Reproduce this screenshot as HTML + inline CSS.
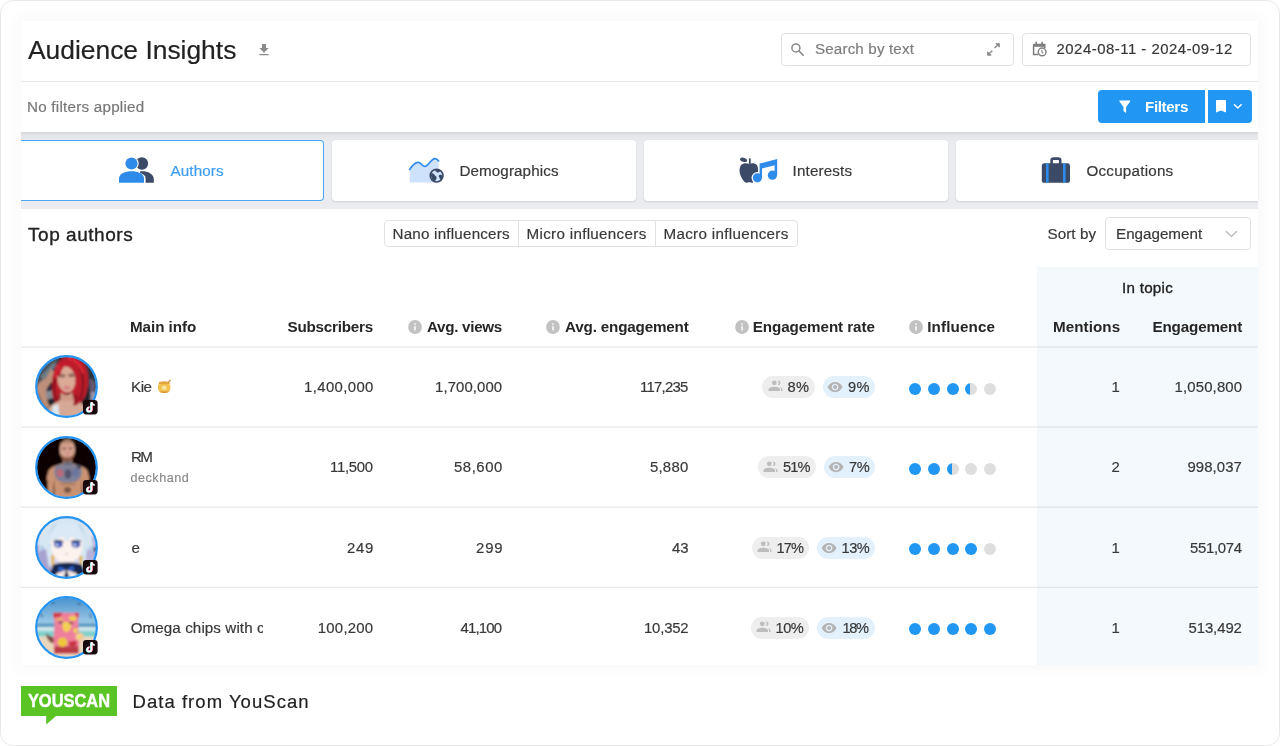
<!DOCTYPE html>
<html lang="en">
<head>
<meta charset="utf-8">
<title>Audience Insights</title>
<style>
*{box-sizing:border-box;margin:0;padding:0}
html,body{width:1280px;height:746px;background:#fff;overflow:hidden}
body{will-change:transform;font-family:"Liberation Sans",sans-serif;color:#2b2b2b;position:relative}
.a{position:absolute}
.t{position:absolute;white-space:nowrap;line-height:1;font-size:15.2px;color:#383838;-webkit-text-stroke:.18px currentColor}
.b{font-weight:700;color:#262626;font-size:15.2px;-webkit-text-stroke:0}
.p{font-size:14.6px}
.n{font-size:14.9px}
.m{-webkit-text-stroke:.35px currentColor}
.r{text-align:right}
svg{position:absolute;overflow:visible}
#frame{left:0;top:0;width:1280px;height:746px;border:1px solid #e9e9e9;border-radius:13px}
#panel{left:21px;top:21px;width:1237px;height:644px;background:#fff;box-shadow:0 0 14px 6px rgba(0,0,0,.025)}
.hr{height:1px;background:#e9e9e9;left:21px;width:1237px}
.hr2{height:2px;left:21px;width:1237px}
.box{border:1px solid #e0e2e5;border-radius:4px;background:#fff}
#band{left:21px;top:132px;width:1237px;height:77px;background:linear-gradient(#d7d8db 0,#e5e6e9 4px,#ebecef 10px,#ebecef 100%)}
.tab{top:140px;height:61px;background:#fff;border-radius:4px;box-shadow:0 1px 2px rgba(0,0,0,.12)}
#tab1{left:21px;width:303px;border:1.5px solid #4ba6f5;border-left:0;border-radius:0 4px 4px 0;box-shadow:none}
#tab2{left:332px;width:304px}
#tab3{left:644px;width:304px}
#tab4{left:956px;width:302px;border-radius:4px 0 0 4px}
#seg{left:384px;top:220px;width:414px;height:27px}
.vd{top:221px;width:1px;height:25px;background:#e0e2e5}
#topic{left:1037px;top:267px;width:221px;height:398px;background:#f4f9fe}
.btn{background:#2196f3;top:90px;height:33px}
.pill{height:22px;border-radius:11px}
.pg{background:#eeeeee}
.pb{background:#e3f1fd}
.dot{width:12px;height:12px;border-radius:6px;background:#2196f3}
.dg{background:#dedede}
.dh{background:linear-gradient(90deg,#2196f3 0,#2196f3 42%,#dedede 42%)}
.av{width:63px;height:63px;left:35px}
#t_title{left:28.00px;top:37.00px;letter-spacing:0.000px}
#t_search{left:815.00px;top:41.00px;letter-spacing:0.138px}
#t_date{left:1056.50px;top:42.00px;letter-spacing:0.511px}
#t_nofilt{left:27.00px;top:99.00px;letter-spacing:0.238px}
#t_filters{left:1145.00px;top:99.00px;letter-spacing:-0.375px}
#t_tab1{left:170.50px;top:162.60px;letter-spacing:0.113px}
#t_tab2{left:459.40px;top:162.60px;letter-spacing:0.110px}
#t_tab3{left:792.50px;top:162.60px;letter-spacing:0.169px}
#t_tab4{left:1086.50px;top:162.60px;letter-spacing:0.225px}
#t_top{left:28.00px;top:224.61px;letter-spacing:0.540px}
#t_seg1{left:392.50px;top:226.00px;letter-spacing:0.210px}
#t_seg2{left:526.50px;top:226.00px;letter-spacing:0.309px}
#t_seg3{left:663.50px;top:226.00px;letter-spacing:0.309px}
#t_sortby{left:1047.50px;top:226.00px;letter-spacing:0.075px}
#t_sortval{left:1116.00px;top:226.00px;letter-spacing:0.000px}
#t_intopic{left:1122.00px;top:280.00px;letter-spacing:0.257px}
#h_main{left:130.00px;top:319.00px;letter-spacing:-0.056px}
#h_subs{left:287.50px;top:319.00px;letter-spacing:-0.202px}
#h_views{left:427.00px;top:319.00px;letter-spacing:-0.300px}
#h_eng{left:565.00px;top:319.00px;letter-spacing:-0.161px}
#h_rate{left:752.75px;top:319.00px;letter-spacing:-0.080px}
#h_inf{left:927.25px;top:319.00px;letter-spacing:0.141px}
#h_men{left:1053.00px;top:319.00px;letter-spacing:0.064px}
#h_teng{left:1152.50px;top:319.00px;letter-spacing:-0.150px}
#r1_name{left:131.00px;top:379.00px;letter-spacing:-0.450px}
#r1_subs{left:304.00px;top:380.00px;letter-spacing:0.394px}
#r1_views{left:435.00px;top:380.00px;letter-spacing:0.112px}
#r1_eng{left:640.00px;top:380.00px;letter-spacing:-0.750px}
#r1_men{left:1111.50px;top:380.00px;letter-spacing:0.000px}
#r1_teng{left:1174.50px;top:380.00px;letter-spacing:0.169px}
#r1_p1{left:787.50px;top:380.00px;letter-spacing:0.450px}
#r1_p2{left:848.00px;top:380.00px;letter-spacing:0.450px}
#r2_name{left:131.00px;top:449.00px;letter-spacing:-1.800px}
#r2_sub{left:130.50px;top:471.70px;letter-spacing:0.514px}
#r2_subs{left:330.00px;top:460.20px;letter-spacing:-0.270px}
#r2_views{left:454.00px;top:460.20px;letter-spacing:0.540px}
#r2_eng{left:650.00px;top:460.20px;letter-spacing:0.225px}
#r2_men{left:1111.50px;top:460.20px;letter-spacing:0.000px}
#r2_teng{left:1187.50px;top:460.20px;letter-spacing:0.075px}
#r2_p1{left:783.00px;top:460.20px;letter-spacing:-0.900px}
#r2_p2{left:849.00px;top:460.20px;letter-spacing:-0.450px}
#r3_name{left:131.50px;top:539.61px;letter-spacing:0.000px}
#r3_subs{left:347.00px;top:540.61px;letter-spacing:0.675px}
#r3_views{left:476.00px;top:540.61px;letter-spacing:0.900px}
#r3_eng{left:672.00px;top:540.61px;letter-spacing:-0.000px}
#r3_men{left:1111.50px;top:540.61px;letter-spacing:0.000px}
#r3_teng{left:1190.00px;top:540.61px;letter-spacing:-0.300px}
#r3_p1{left:776.50px;top:540.61px;letter-spacing:-0.900px}
#r3_p2{left:841.50px;top:540.61px;letter-spacing:-0.450px}
#r4_name{left:130.70px;top:619.81px;letter-spacing:0.080px}
#r4_subs{left:317.75px;top:620.81px;letter-spacing:0.263px}
#r4_views{left:460.50px;top:620.81px;letter-spacing:-0.810px}
#r4_eng{left:644.00px;top:620.81px;letter-spacing:-0.180px}
#r4_men{left:1111.50px;top:620.81px;letter-spacing:0.000px}
#r4_teng{left:1188.50px;top:620.81px;letter-spacing:-0.075px}
#r4_p1{left:775.50px;top:620.81px;letter-spacing:-0.450px}
#r4_p2{left:842.50px;top:620.81px;letter-spacing:-1.350px}
#t_foot{left:132.50px;top:692.61px;letter-spacing:1.041px}
</style>
</head>
<body>
<div id="frame" class="a"></div>
<main id="panel" class="a"></main>

<header>
  <h1 id="t_title" class="t" style="font-size:26.4px;font-weight:400;color:#222">Audience Insights</h1>
  <svg id="ic_dl" style="left:255.5px;top:41.7px" width="16" height="16" viewBox="0 0 24 24"><path fill="#8a8a8a" d="M19 9h-4V3H9v6H5l7 7 7-7zM5 18v2h14v-2H5z"/></svg>
  <div class="a box" style="left:781px;top:33px;width:233px;height:33px"></div>
  <svg style="left:790px;top:41.5px" width="15" height="15" viewBox="0 0 15 15"><circle cx="5.9" cy="5.9" r="4" fill="none" stroke="#8a8a8a" stroke-width="1.5"/><path d="M8.9 8.9L13.2 13.2" stroke="#8a8a8a" stroke-width="1.6" stroke-linecap="round"/></svg>
  <span id="t_search" class="t" style="color:#7d7d7d">Search by text</span>
  <svg style="left:986px;top:42px" width="15" height="15" viewBox="0 0 15 15"><g fill="#8a8a8a" stroke="#8a8a8a" stroke-width="1.4"><path d="M8.500 6.100L12.600 2.300" fill="none"/><path d="M10 1.600H13.400V5.200Z" stroke-width=".8" stroke-linejoin="round"/><path d="M6.300 8.800L2.200 12.600" fill="none"/><path d="M1.500 9.800V13.300H5.200Z" stroke-width=".8" stroke-linejoin="round"/></g></svg>
  <div class="a box" style="left:1022px;top:33px;width:229px;height:33px"></div>
  <svg style="left:1032px;top:41px" width="16" height="17" viewBox="0 0 16 17"><g fill="none" stroke="#7d7d7d" stroke-width="1.5"><path d="M1.6 3.4H12.8V7M1.6 3.4V13.6H6"/><path d="M4.2 .8V3M10.2 .8V3" stroke-width="1.6"/><path d="M1.6 4.6H12.8" stroke-width="2.4"/><circle cx="10.1" cy="10.9" r="3.9" fill="#fff" stroke-width="1.4"/><path d="M9.900 8.900V11.100L11.300 12.300" stroke-width="1.100"/></g></svg>
  <span id="t_date" class="t n">2024-08-11 - 2024-09-12</span>
</header>
<div class="a hr" style="top:81px"></div>

<section>
  <span id="t_nofilt" class="t" style="color:#777">No filters applied</span>
  <div class="a btn" style="left:1098px;width:107px;border-radius:4px 0 0 4px"></div>
  <div class="a btn" style="left:1207.5px;width:44px;border-radius:0 4px 4px 0"></div>
  <svg style="left:1118.7px;top:100px" width="11.6" height="13" viewBox="0 0 13 13" preserveAspectRatio="none"><path fill="#fff" d="M.9 .5H12.1C12.6 .5 12.8 1 12.5 1.4L8 7V12.2C8 12.7 7.5 12.9 7.1 12.6L5.4 11.3C5.1 11.1 5 10.9 5 10.6V7L.5 1.4C.2 1 .4 .5 .9 .5Z"/></svg>
  <span id="t_filters" class="t b" style="color:#fff">Filters</span>
  <svg style="left:1216px;top:100px" width="10" height="13" viewBox="0 0 10 13"><path fill="#fff" d="M1 0H9C9.6 0 10 .4 10 1V12.6L5 10.4 0 12.6V1C0 .4 .4 0 1 0Z"/></svg>
  <svg style="left:1233px;top:103px" width="10" height="7" viewBox="0 0 10 7"><path d="M1 1.2L4.8 5 8.6 1.2" fill="none" stroke="#fff" stroke-width="1.5"/></svg>
</section>

<nav>
  <div id="band" class="a"></div>
  <div id="tab1" class="a tab"></div>
  <div id="tab2" class="a tab"></div>
  <div id="tab3" class="a tab"></div>
  <div id="tab4" class="a tab"></div>
  <!-- authors icon -->
  <svg style="left:118px;top:156px" width="37" height="28" viewBox="0 0 37 28">
    <circle cx="23.9" cy="7.5" r="6.2" fill="#3b4a66"/>
    <path fill="#3b4a66" d="M22 15.4C28 14.6 35.8 17 35.8 23.6V26.8H24Z"/>
    <circle cx="13.5" cy="7.5" r="7.2" fill="#fff"/>
    <path fill="#fff" d="M0 28V22C0 14 27.6 14 27.6 22V28Z"/>
    <circle cx="13.5" cy="7.5" r="6.1" fill="#2f8bea"/>
    <path fill="#2f8bea" d="M1 26.8V22.6C1 17.4 7.4 15.2 13.5 15.2S26 17.4 26 22.6V26.8Z"/>
  </svg>
  <span id="t_tab1" class="t" style="color:#3d9df2">Authors</span>
  <!-- demographics icon -->
  <svg style="left:408px;top:156px" width="38" height="28" viewBox="0 0 38 28">
    <path fill="#cfe2fb" d="M1.8 13.4C4.6 9 8 5.6 11 6.6C13.6 7.6 15 10.8 17.4 10.4C21 9.6 23 2.6 27 2.6C28.6 2.6 29.8 3.8 30.6 5V26.6H1.8Z"/>
    <path fill="none" stroke="#2f8bea" stroke-width="1.6" stroke-linecap="round" d="M1.6 13.6C4.6 9 8 5.6 11 6.6C13.6 7.6 15 10.8 17.4 10.4C21 9.6 23 2.6 27 2.6C28.6 2.6 29.8 3.8 30.6 5"/>
    <circle cx="28.6" cy="19.6" r="6.4" fill="#cfe2fb" stroke="#3b4a66" stroke-width="1.6"/>
    <path fill="#3b4a66" d="M23 17.4C24.4 17 26 17.6 26.6 19C27.4 20.2 28.8 20.4 28.6 22C28.4 23.4 27.4 24.4 26.8 25.4C24.4 24.4 22.6 21.2 23 17.4ZM27.4 13.6C29 13.2 31.8 13.6 33 15C31.8 15.2 31.4 16.4 30.2 16.6C29 16.8 28.6 15.4 27.4 15.2ZM31.4 19C32.6 18.6 34.2 19 34.8 20C34.6 21.8 33.8 23.2 32.6 24.2C31.8 23 31.8 21.8 31 21C30.6 20.2 30.8 19.4 31.4 19Z"/>
  </svg>
  <span id="t_tab2" class="t">Demographics</span>
  <!-- interests icon -->
  <svg style="left:739px;top:157px" width="40" height="27" viewBox="0 0 40 27">
    <ellipse cx="4.6" cy="2.8" rx="3.6" ry="2" fill="#3b4a66" transform="rotate(18 4.6 2.8)"/>
    <path d="M10.8 1.4V7" stroke="#3b4a66" stroke-width="1.8"/>
    <path fill="#3b4a66" d="M10.4 7.2C12.4 5.8 16 5.8 17.8 8C19.6 10.4 19.4 15 17.8 19.4C16.6 22.6 14.6 26.4 12 25.6C10.8 25.2 10 25.2 8.8 25.6C6 26.4 3.6 23 2 19.4C0 15 .2 10.4 2.2 8C4.2 5.8 8.2 5.8 10.4 7.2Z"/>
    <circle cx="18.4" cy="20.8" r="5.9" fill="#fff"/>
    <path fill="#fff" d="M19.6 5.6L39.4 .4V20H34V9.4L24.4 12V22H19.6Z"/>
    <circle cx="18.4" cy="20.8" r="4.6" fill="#2f8bea"/>
    <circle cx="33.4" cy="18.2" r="4.6" fill="#2f8bea"/>
    <path fill="#2f8bea" d="M20.6 6.6L38.2 2V18.2H35.6V8.2L23 11.6V20.8H20.6Z"/>
  </svg>
  <span id="t_tab3" class="t">Interests</span>
  <!-- briefcase icon -->
  <svg style="left:1041px;top:156px" width="30" height="28" viewBox="0 0 30 28">
    <path d="M10.6 8V4.4C10.6 3.2 11.4 2.6 12.4 2.6H17.4C18.4 2.6 19.2 3.2 19.2 4.4V8" fill="none" stroke="#3b4a66" stroke-width="2.6"/>
    <rect x=".8" y="7.2" width="28.2" height="19.6" rx="2.6" fill="#3b4a66"/>
    <rect x="5" y="7.2" width="2.6" height="19.6" fill="#2f8bea"/>
    <rect x="22" y="7.2" width="2.6" height="19.6" fill="#2f8bea"/>
  </svg>
  <span id="t_tab4" class="t">Occupations</span>
</nav>

<section>
  <h2 id="t_top" class="t m" style="font-size:19px;font-weight:400;color:#222">Top authors</h2>
  <div id="seg" class="a box"></div>
  <div class="a vd" style="left:518px"></div>
  <div class="a vd" style="left:655px"></div>
  <span id="t_seg1" class="t">Nano influencers</span>
  <span id="t_seg2" class="t">Micro influencers</span>
  <span id="t_seg3" class="t">Macro influencers</span>
  <span id="t_sortby" class="t">Sort by</span>
  <div class="a box" style="left:1105px;top:217px;width:146px;height:33px"></div>
  <span id="t_sortval" class="t">Engagement</span>
  <svg style="left:1225px;top:230px" width="13" height="8" viewBox="0 0 13 8"><path d="M1 1.2L6.4 6.4 11.8 1.2" fill="none" stroke="#b5b5b5" stroke-width="1.3"/></svg>
</section>

<section id="table">
  <div id="topic" class="a"></div>
  <span id="t_intopic" class="t m" style="color:#222">In topic</span>
  <span id="h_main" class="t b">Main info</span>
  <span id="h_subs" class="t b">Subscribers</span>
  <span id="h_views" class="t b">Avg. views</span>
  <span id="h_eng" class="t b">Avg. engagement</span>
  <span id="h_rate" class="t b">Engagement rate</span>
  <span id="h_inf" class="t b">Influence</span>
  <span id="h_men" class="t b">Mentions</span>
  <span id="h_teng" class="t b">Engagement</span>
  <svg style="left:408.0px;top:319.600px" width="14" height="14" viewBox="0 0 14 14"><circle cx="7" cy="7" r="6.900" fill="#c2c2c2"/><path d="M7 6.200V10.400" stroke="#fff" stroke-width="1.500"/><circle cx="7" cy="4.100" r=".95" fill="#fff"/></svg>
<svg style="left:546.0px;top:319.600px" width="14" height="14" viewBox="0 0 14 14"><circle cx="7" cy="7" r="6.900" fill="#c2c2c2"/><path d="M7 6.200V10.400" stroke="#fff" stroke-width="1.500"/><circle cx="7" cy="4.100" r=".95" fill="#fff"/></svg>
<svg style="left:735.0px;top:319.600px" width="14" height="14" viewBox="0 0 14 14"><circle cx="7" cy="7" r="6.900" fill="#c2c2c2"/><path d="M7 6.200V10.400" stroke="#fff" stroke-width="1.500"/><circle cx="7" cy="4.100" r=".95" fill="#fff"/></svg>
<svg style="left:909.4px;top:319.600px" width="14" height="14" viewBox="0 0 14 14"><circle cx="7" cy="7" r="6.900" fill="#c2c2c2"/><path d="M7 6.200V10.400" stroke="#fff" stroke-width="1.500"/><circle cx="7" cy="4.100" r=".95" fill="#fff"/></svg>
  <div class="a hr2" style="top:346px;background:linear-gradient(rgba(0,0,0,.055) 50%,rgba(0,0,0,.055) 50%)"></div>
  <div class="a hr2" style="top:426px;background:linear-gradient(rgba(0,0,0,.055) 50%,rgba(0,0,0,.055) 50%)"></div>
  <div class="a hr2" style="top:506px;background:linear-gradient(rgba(0,0,0,.04) 50%,rgba(0,0,0,.07) 50%)"></div>
  <div class="a hr2" style="top:586px;background:linear-gradient(rgba(0,0,0,.025) 50%,rgba(0,0,0,.085) 50%)"></div>
  <article id="r1">
<svg class="av" style="left:35.3px;top:355.4px" width="62.600" height="62.600" viewBox="0 0 63 63"><defs><clipPath id="c_r1"><circle cx="31.500" cy="31.500" r="29.600"/></clipPath></defs><g clip-path="url(#c_r1)"><filter id="blr1" x="-10%" y="-10%" width="120%" height="120%"><feGaussianBlur stdDeviation="0.8"/></filter><g filter="url(#blr1)"><rect x="-3" y="-3" width="69" height="69" fill="#1d2029"/><path d="M-2 28L4 12L24 0L22 10L10 28Z" fill="#46535f"/><path d="M5 22L19 7L21 10L9 25Z" fill="#6f7d86"/><path d="M2 33L16 30L17 40L4 43Z" fill="#17233c"/><path d="M9 37L18 35L18 43L11 45Z" fill="#858c94"/><path d="M50 6L64 14V28L53 22Z" fill="#2a303c"/><path d="M54 24C58 23 61 27 61 32C61 37 58 40 55 40Z" fill="#65566f"/><path d="M56 37L62 37L60 45L55 45Z" fill="#9c94a6"/><path d="M2 30C4 27 8 25 11 23L16 14L20 17L19 25C15 28 12 32 11 38C11 42 13 48 15 52L7 56C3 48 1 38 2 30Z" fill="#be907b"/><path d="M3 36C5 42 8 49 12 53L8 57C3 50 2 42 3 36Z" fill="#8f6856"/><path d="M9 66C10 55 16 49 25 45L41 45C48 47 53 54 54 66Z" fill="#d6a896"/><path d="M16.500 66L17.500 51L23.500 49L24.500 66Z" fill="#dde6eb"/><path d="M29 2C36 0 45 2 50 10C54 16 54 28 52 36C50 44 46 48 41 50C38 48 38 42 38 38L24 40C26 44 24 48 21 47C17 44 16 36 17 26C18 16 22 6 29 2Z" fill="#bd1c2a"/><path d="M45 13C49 22 49 34 45 45M20 23C18 32 19 40 22 46M40 40C42 44 41 48 39 50" stroke="#8c1420" stroke-width="2.800" fill="none"/><path d="M33 3C40 4 46 10 48 18M24 10C22 14 21 18 21 22" stroke="#e02c39" stroke-width="2.200" fill="none"/><ellipse cx="31.400" cy="24.500" rx="9" ry="13" fill="#dbaa97" transform="rotate(-6 31.400 24.500)"/><path d="M21 20C22 12 28 7 34 8C30 10 26 14 25 22Z" fill="#c51f2d"/><path d="M24 21.500H30M33.500 21H39.500" stroke="#6f4a42" stroke-width="1.700"/><path d="M23.500 20.500C25 19 29 19 30.500 20.500M33 20C34.500 18.700 38.500 18.700 40 20" stroke="#5a3a34" stroke-width=".8" fill="none"/><ellipse cx="31.800" cy="32.800" rx="3.200" ry="1.700" fill="#d47b85"/><path d="M26 37C29 41 34 41 37 37L39 46H25Z" fill="#cf9b87"/></g></g><circle cx="31.500" cy="31.500" r="30.300" fill="none" stroke="#2493f3" stroke-width="2.200"/></svg><svg style="left:83.400px;top:399.6px" width="14.600" height="14.400" viewBox="0 0 14 14" preserveAspectRatio="none"><rect width="14" height="14" rx="3" fill="#180a0c"/><g transform="translate(7.900 6.900) scale(1.18) translate(-7.400 -6.800)"><path d="M7.600 2.800V8.700A1.700 1.700 0 1 1 5.900 7" fill="none" stroke="#5fd7e0" stroke-width="1.500" transform="translate(-.45 .35)"/><path d="M7.600 2.800V8.700A1.700 1.700 0 1 1 5.900 7" fill="none" stroke="#f0365a" stroke-width="1.500" transform="translate(.45 -.25)"/><path d="M7.600 2.600V8.700A1.700 1.700 0 1 1 5.900 7M7.600 2.800C7.800 4.200 8.800 5 10.200 5.100" fill="none" stroke="#fff" stroke-width="1.500"/></g></svg>
<span id="r1_name" class="t">Kie</span>
<svg role="img" aria-label="&#x1F36F; honey pot" style="left:157px;top:378.500px" width="15" height="15" viewBox="0 0 15 15"><title>&#x1F36F;</title><path d="M11 3.600L13.600 1" stroke="#c9863c" stroke-width="1.200"/><ellipse cx="7.200" cy="4.200" rx="5.600" ry="1.900" fill="#e0a33e"/><path fill="#f3c14e" d="M1.400 5.200H13C14 7.400 13.600 11.400 11.600 13.200C10.600 14.200 4 14.200 2.800 13.200C.8 11.400 .4 7.400 1.400 5.200Z"/><path fill="#d88d3a" d="M2.800 12.600H11.600C10.600 14.300 4 14.300 2.800 12.600Z"/><ellipse cx="7.200" cy="8.800" rx="2.600" ry="2.200" fill="#f9e29a"/></svg>
<span id="r1_subs" class="t n">1,400,000</span>
<span id="r1_views" class="t n">1,700,000</span>
<span id="r1_eng" class="t n">117,235</span>
<span id="r1_men" class="t n">1</span>
<span id="r1_teng" class="t n">1,050,800</span>
<div class="a pill pg" style="left:762.3px;top:376.1px;width:52.4px"></div>
<svg style="left:767.6px;top:380.2px" width="15" height="12" viewBox="0 0 15 12"><g fill="#bdbdbd"><circle cx="6.300" cy="2.800" r="2.400"/><path d="M.5 11V9.600C.5 7.600 4 6.800 6.300 6.800S12 7.600 12 9.600V11Z"/><path d="M9.700 .45A2.300 2.300 0 1 1 9.700 4.950A3.400 3.400 0 0 0 9.700 .45Z"/><path d="M11.600 6.900C13.400 7.300 14.500 8.300 14.500 9.600V11H13.100V9.600C13.100 8.500 12.500 7.600 11.600 6.900Z"/></g></svg>
<span id="r1_p1" class="t p">8%</span>
<div class="a pill pb" style="left:823.2px;top:376.1px;width:51.8px"></div>
<svg style="left:827.4px;top:379.0px" width="16.200" height="16.200" viewBox="0 0 24 24"><path fill="#b4b4b4" d="M12 4.500C7 4.500 2.730 7.610 1 12c1.730 4.390 6 7.500 11 7.500s9.270-3.110 11-7.500c-1.730-4.390-6-7.500-11-7.500zM12 17c-2.760 0-5-2.240-5-5s2.240-5 5-5 5 2.240 5 5-2.240 5-5 5zm0-8c-1.660 0-3 1.340-3 3s1.340 3 3 3 3-1.340 3-3-1.340-3-3-3z"/></svg>
<span id="r1_p2" class="t p">9%</span>
<i class="a dot" style="left:909.4px;top:382.6px"></i>
<i class="a dot" style="left:928.1px;top:382.6px"></i>
<i class="a dot" style="left:946.8px;top:382.6px"></i>
<i class="a dot dh" style="left:965.4px;top:382.6px"></i>
<i class="a dot dg" style="left:984.1px;top:382.6px"></i>
</article>
<article id="r2">
<svg class="av" style="left:35.3px;top:435.6px" width="62.600" height="62.600" viewBox="0 0 63 63"><defs><clipPath id="c_r2"><circle cx="31.500" cy="31.500" r="29.600"/></clipPath></defs><g clip-path="url(#c_r2)"><filter id="blr2" x="-10%" y="-10%" width="120%" height="120%"><feGaussianBlur stdDeviation="0.9"/></filter><g filter="url(#blr2)"><rect x="-3" y="-3" width="69" height="69" fill="#0c0606"/><path d="M11 66C11 52 11 40 14 34C17 30 24 29 28 27V24H37V27C41 29 49 30 52 34C55 40 55 52 54 66Z" fill="#c99373"/><path d="M19.500 42C19 50 19.500 58 21 66H18.500C17.500 58 17.800 50 19.500 42ZM46.500 42C47 50 46.500 58 45 66H47.500C48.500 58 48.200 50 46.500 42Z" fill="#6e4433"/><path d="M13 44C13 52 13 60 14 66H11V44ZM53 44C53 52 53 60 52 66H55V44Z" fill="#3a2018"/><path d="M21 30C25 27.500 41 27.500 45 30C48 34 47 42 42 45C38 47 28 47 24 45C19 42 18 34 21 30Z" fill="#7f8198"/><ellipse cx="25" cy="37" rx="3.600" ry="4" fill="#b7697a"/><ellipse cx="40.500" cy="36.500" rx="3.400" ry="4" fill="#6a769f"/><ellipse cx="33" cy="38" rx="3.500" ry="5" fill="#55566e"/><path d="M28.500 25H37V29H28.500Z" fill="#6d6a78"/><ellipse cx="44" cy="31" rx="2.500" ry="2" fill="#4a4a58"/><path d="M25 48H41" stroke="#9b6a50" stroke-width="1.200"/><ellipse cx="32.500" cy="54" rx="3.600" ry="3" fill="#7a5646"/><ellipse cx="32.300" cy="14" rx="7.700" ry="10.800" fill="#d3a08c"/><path d="M25 9C25.500 3 39 3 39.600 9C38 6 27 6 25 9Z" fill="#a67b5c"/><path d="M25.200 17C26 23 29 26 32.300 26C35.600 26 38.600 23 39.400 17C37.500 20.500 35.500 21.500 32.300 21.500C29 21.500 27 20.500 25.200 17Z" fill="#84573f"/><path d="M27.500 12.500H30.800M33.800 12.500H37" stroke="#6b4034" stroke-width="1.300"/><ellipse cx="32.300" cy="19.200" rx="2" ry=".9" fill="#d9838c"/></g></g><circle cx="31.500" cy="31.500" r="30.300" fill="none" stroke="#2493f3" stroke-width="2.200"/></svg><svg style="left:83.400px;top:479.8px" width="14.600" height="14.400" viewBox="0 0 14 14" preserveAspectRatio="none"><rect width="14" height="14" rx="3" fill="#180a0c"/><g transform="translate(7.900 6.900) scale(1.18) translate(-7.400 -6.800)"><path d="M7.600 2.800V8.700A1.700 1.700 0 1 1 5.900 7" fill="none" stroke="#5fd7e0" stroke-width="1.500" transform="translate(-.45 .35)"/><path d="M7.600 2.800V8.700A1.700 1.700 0 1 1 5.900 7" fill="none" stroke="#f0365a" stroke-width="1.500" transform="translate(.45 -.25)"/><path d="M7.600 2.600V8.700A1.700 1.700 0 1 1 5.900 7M7.600 2.800C7.800 4.200 8.800 5 10.200 5.100" fill="none" stroke="#fff" stroke-width="1.500"/></g></svg>
<span id="r2_name" class="t">RM</span>
<span id="r2_sub" class="t" style="font-size:12.600px;color:#8a8a8a">deckhand</span>
<span id="r2_subs" class="t n">11,500</span>
<span id="r2_views" class="t n">58,600</span>
<span id="r2_eng" class="t n">5,880</span>
<span id="r2_men" class="t n">2</span>
<span id="r2_teng" class="t n">998,037</span>
<div class="a pill pg" style="left:757.6px;top:456.4px;width:58.1px"></div>
<svg style="left:762.9px;top:460.5px" width="15" height="12" viewBox="0 0 15 12"><g fill="#bdbdbd"><circle cx="6.300" cy="2.800" r="2.400"/><path d="M.5 11V9.600C.5 7.600 4 6.800 6.300 6.800S12 7.600 12 9.600V11Z"/><path d="M9.700 .45A2.300 2.300 0 1 1 9.700 4.950A3.400 3.400 0 0 0 9.700 .45Z"/><path d="M11.600 6.900C13.400 7.300 14.500 8.300 14.500 9.600V11H13.100V9.600C13.100 8.500 12.500 7.600 11.600 6.900Z"/></g></svg>
<span id="r2_p1" class="t p">51%</span>
<div class="a pill pb" style="left:823.8px;top:456.4px;width:51.2px"></div>
<svg style="left:828.0px;top:459.3px" width="16.200" height="16.200" viewBox="0 0 24 24"><path fill="#b4b4b4" d="M12 4.500C7 4.500 2.730 7.610 1 12c1.730 4.390 6 7.500 11 7.500s9.270-3.110 11-7.500c-1.730-4.390-6-7.500-11-7.500zM12 17c-2.760 0-5-2.240-5-5s2.240-5 5-5 5 2.240 5 5-2.240 5-5 5zm0-8c-1.660 0-3 1.340-3 3s1.340 3 3 3 3-1.340 3-3-1.340-3-3-3z"/></svg>
<span id="r2_p2" class="t p">7%</span>
<i class="a dot" style="left:909.4px;top:462.7px"></i>
<i class="a dot" style="left:928.1px;top:462.7px"></i>
<i class="a dot dh" style="left:946.8px;top:462.7px"></i>
<i class="a dot dg" style="left:965.4px;top:462.7px"></i>
<i class="a dot dg" style="left:984.1px;top:462.7px"></i>
</article>
<article id="r3">
<svg class="av" style="left:35.3px;top:515.7px" width="62.600" height="62.600" viewBox="0 0 63 63"><defs><clipPath id="c_r3"><circle cx="31.500" cy="31.500" r="29.600"/></clipPath></defs><g clip-path="url(#c_r3)"><filter id="blr3" x="-10%" y="-10%" width="120%" height="120%"><feGaussianBlur stdDeviation="0.8"/></filter><g filter="url(#blr3)"><rect x="-3" y="-3" width="69" height="69" fill="#d3d6ee"/><path d="M-2 30L10 28L18 60L-2 66Z" fill="#9f98c9"/><path d="M50 18L66 14V60L50 58Z" fill="#b9b5dd"/><path d="M4 6L18 4L14 20L4 24Z" fill="#f1e2e2"/><path d="M48 6L58 12L58 22L50 18Z" fill="#efe4ea"/><ellipse cx="60" cy="34" rx="2" ry="3" fill="#3b3f6a"/><path d="M31 2C47 2 57 14 58 30C59 42 57 50 52 57L46 46V24H17V46L11 58C5 50 3 40 4 30C5 14 15 2 31 2Z" fill="#d6e6f2"/><path d="M7 30C7 44 9 52 13 58M56 30C56 44 54 50 51 56" stroke="#a7c3df" stroke-width="2.600" fill="none"/><path d="M20 8C16 14 14 22 14 30M44 8C48 14 50 22 50 30" stroke="#b9d2e6" stroke-width="1.600" fill="none"/><path d="M2 36L11 33L15 58L4 58Z" fill="#a8a2d0"/><path d="M52 33L61 36L60 54L49 57Z" fill="#b5b1da"/><path d="M16 25C16 19 47 19 47.500 25C48 36 45 42 39 45.500C34.500 47.500 28.500 47.500 24 45.500C18.500 42 15.500 36 16 25Z" fill="#fdf2ee"/><path d="M13 30C12 14 24 7 31 7C40 7 52 14 50.500 31L46 23L42.500 28L37.500 19L32 26L26.500 19L21.500 28L17.500 23Z" fill="#dae9f5"/><ellipse cx="23.300" cy="28.300" rx="4.400" ry="3.400" fill="#4c63b6"/><ellipse cx="41" cy="28.300" rx="4.400" ry="3.400" fill="#4c63b6"/><path d="M18.500 25.600C21 24.400 26 24.400 28.200 25.800M36 25.800C38.500 24.400 43.500 24.400 46 25.600" stroke="#2a3052" stroke-width="1.500" fill="none"/><ellipse cx="22" cy="29" rx="1.400" ry="1.200" fill="#c9d5f4"/><ellipse cx="39.800" cy="29" rx="1.400" ry="1.200" fill="#c9d5f4"/><path d="M30.500 38H33" stroke="#d9a9a0" stroke-width=".9"/><path d="M16 39.500L19.400 39.500L18.800 50.500L16.800 50.500Z" fill="#e8b23a"/><path d="M44.400 40L47.600 40L47 49.500L45 49.500Z" fill="#e8b23a"/><path d="M14 60L18 49C23 45.500 42 45.500 47 49L51 60Z" fill="#172650"/><path d="M23.500 50.500L30 52.500L29 55.500L23.500 55ZM38.800 50L33 52.200L33.800 55L38.800 54.600Z" fill="#2e62c9"/><path d="M18 66L22 57L31.500 54L41 57L46 66Z" fill="#f4e8e5"/><path d="M31.500 53L28.500 62H34.500Z" fill="#1c2d5c"/></g></g><circle cx="31.500" cy="31.500" r="30.300" fill="none" stroke="#2493f3" stroke-width="2.200"/></svg><svg style="left:83.400px;top:559.9px" width="14.600" height="14.400" viewBox="0 0 14 14" preserveAspectRatio="none"><rect width="14" height="14" rx="3" fill="#180a0c"/><g transform="translate(7.900 6.900) scale(1.18) translate(-7.400 -6.800)"><path d="M7.600 2.800V8.700A1.700 1.700 0 1 1 5.900 7" fill="none" stroke="#5fd7e0" stroke-width="1.500" transform="translate(-.45 .35)"/><path d="M7.600 2.800V8.700A1.700 1.700 0 1 1 5.900 7" fill="none" stroke="#f0365a" stroke-width="1.500" transform="translate(.45 -.25)"/><path d="M7.600 2.600V8.700A1.700 1.700 0 1 1 5.900 7M7.600 2.800C7.800 4.200 8.800 5 10.200 5.100" fill="none" stroke="#fff" stroke-width="1.500"/></g></svg>
<span id="r3_name" class="t">e</span>
<span id="r3_subs" class="t n">249</span>
<span id="r3_views" class="t n">299</span>
<span id="r3_eng" class="t n">43</span>
<span id="r3_men" class="t n">1</span>
<span id="r3_teng" class="t n">551,074</span>
<div class="a pill pg" style="left:751.5px;top:536.7px;width:57.5px"></div>
<svg style="left:756.8px;top:540.8px" width="15" height="12" viewBox="0 0 15 12"><g fill="#bdbdbd"><circle cx="6.300" cy="2.800" r="2.400"/><path d="M.5 11V9.600C.5 7.600 4 6.800 6.300 6.800S12 7.600 12 9.600V11Z"/><path d="M9.700 .45A2.300 2.300 0 1 1 9.700 4.950A3.400 3.400 0 0 0 9.700 .45Z"/><path d="M11.600 6.900C13.400 7.300 14.500 8.300 14.500 9.600V11H13.100V9.600C13.100 8.500 12.500 7.600 11.600 6.900Z"/></g></svg>
<span id="r3_p1" class="t p">17%</span>
<div class="a pill pb" style="left:817.1px;top:536.7px;width:57.9px"></div>
<svg style="left:821.3px;top:539.6px" width="16.200" height="16.200" viewBox="0 0 24 24"><path fill="#b4b4b4" d="M12 4.500C7 4.500 2.730 7.610 1 12c1.730 4.390 6 7.500 11 7.500s9.270-3.110 11-7.500c-1.730-4.390-6-7.500-11-7.500zM12 17c-2.760 0-5-2.240-5-5s2.240-5 5-5 5 2.240 5 5-2.240 5-5 5zm0-8c-1.660 0-3 1.340-3 3s1.340 3 3 3 3-1.340 3-3-1.340-3-3-3z"/></svg>
<span id="r3_p2" class="t p">13%</span>
<i class="a dot" style="left:909.4px;top:542.8px"></i>
<i class="a dot" style="left:928.1px;top:542.8px"></i>
<i class="a dot" style="left:946.8px;top:542.8px"></i>
<i class="a dot" style="left:965.4px;top:542.8px"></i>
<i class="a dot dg" style="left:984.1px;top:542.8px"></i>
</article>
<article id="r4">
<svg class="av" style="left:35.3px;top:595.8px" width="62.600" height="62.600" viewBox="0 0 63 63"><defs><clipPath id="c_r4"><circle cx="31.500" cy="31.500" r="29.600"/></clipPath></defs><g clip-path="url(#c_r4)"><filter id="blr4" x="-10%" y="-10%" width="120%" height="120%"><feGaussianBlur stdDeviation="0.8"/></filter><defs><linearGradient id="sky4" x1="0" y1="0" x2="0" y2="1"><stop offset="0" stop-color="#3a88c9"/><stop offset="1" stop-color="#a3cee8"/></linearGradient></defs><g filter="url(#blr4)"><rect x="-3" y="-3" width="69" height="32" fill="url(#sky4)"/><rect x="-3" y="27.500" width="69" height="4" fill="#5a98c3"/><rect x="-3" y="31" width="69" height="4.500" fill="#cfe7ec"/><rect x="-3" y="35" width="69" height="6" fill="#80d0cc"/><rect x="-3" y="40.500" width="69" height="30" fill="#ead6bd"/><path d="M16 5L20 7.500L17 8ZM42.500 6L46.500 8.500L43.500 9ZM5.500 16L8 21L6 21ZM54.500 16.500L57 21.500L55 21.500Z" fill="#2f5578"/><path d="M10.500 37.500L17 41L25 42.500L24.500 47.500L16 47L12.500 43Z" fill="#7c4b3c"/><path d="M18 16.700L44 16.700L43 28L44.500 42L43.500 57.500L19 57.500L18.500 42L19.500 28Z" fill="#ee7f9c"/><path d="M18 16.700L27.500 16.700L25 21L18.500 21.500ZM40 16.700L44 16.700L43.500 22L41 20Z" fill="#cf3b47"/><path d="M19 50.500L43.800 50.500L43.500 57.500L19 57.500Z" fill="#b93a45"/><path d="M33 46L42 44.500L41 50L35 50.500Z" fill="#c9303f"/><path d="M40.500 38L47 36.500L49.500 41L46 45.500L41 44Z" fill="#f3c7a0"/><ellipse cx="37.700" cy="22.300" rx="3.800" ry="2.400" fill="#f0d24a"/><path d="M27.500 27C30 25 35 25.500 36 29C36.500 33 34 36 31 36C28.500 36 27 32 27.500 27Z" fill="#f1d052"/><ellipse cx="40.600" cy="34.500" rx="2.200" ry="2.600" fill="#f0d24a"/><ellipse cx="27.500" cy="46.200" rx="4.800" ry="4.700" fill="#efc83e"/><ellipse cx="44" cy="40.500" rx="2" ry="2.600" fill="#f3d66a"/><path d="M23.500 26.500H27.500M34 27H38" stroke="#5a3a30" stroke-width="1.700"/><path d="M21 24.500C23.500 22.500 26.500 22.500 28.500 24" stroke="#e9c548" stroke-width="1.600" fill="none"/></g></g><circle cx="31.500" cy="31.500" r="30.300" fill="none" stroke="#2493f3" stroke-width="2.200"/></svg><svg style="left:83.400px;top:639.9px" width="14.600" height="14.400" viewBox="0 0 14 14" preserveAspectRatio="none"><rect width="14" height="14" rx="3" fill="#180a0c"/><g transform="translate(7.900 6.900) scale(1.18) translate(-7.400 -6.800)"><path d="M7.600 2.800V8.700A1.700 1.700 0 1 1 5.900 7" fill="none" stroke="#5fd7e0" stroke-width="1.500" transform="translate(-.45 .35)"/><path d="M7.600 2.800V8.700A1.700 1.700 0 1 1 5.900 7" fill="none" stroke="#f0365a" stroke-width="1.500" transform="translate(.45 -.25)"/><path d="M7.600 2.600V8.700A1.700 1.700 0 1 1 5.900 7M7.600 2.800C7.800 4.200 8.800 5 10.200 5.100" fill="none" stroke="#fff" stroke-width="1.500"/></g></svg>
<span id="r4_name" class="t" style="width:132.6px;overflow:hidden;padding-bottom:4px">Omega chips with c</span>
<span id="r4_subs" class="t n">100,200</span>
<span id="r4_views" class="t n">41,100</span>
<span id="r4_eng" class="t n">10,352</span>
<span id="r4_men" class="t n">1</span>
<span id="r4_teng" class="t n">513,492</span>
<div class="a pill pg" style="left:750.5px;top:616.9px;width:58.5px"></div>
<svg style="left:755.8px;top:621.0px" width="15" height="12" viewBox="0 0 15 12"><g fill="#bdbdbd"><circle cx="6.300" cy="2.800" r="2.400"/><path d="M.5 11V9.600C.5 7.600 4 6.800 6.300 6.800S12 7.600 12 9.600V11Z"/><path d="M9.700 .45A2.300 2.300 0 1 1 9.700 4.950A3.400 3.400 0 0 0 9.700 .45Z"/><path d="M11.600 6.900C13.400 7.300 14.500 8.300 14.500 9.600V11H13.100V9.600C13.100 8.500 12.500 7.600 11.600 6.900Z"/></g></svg>
<span id="r4_p1" class="t p">10%</span>
<div class="a pill pb" style="left:817.1px;top:616.9px;width:57.9px"></div>
<svg style="left:821.3px;top:619.8px" width="16.200" height="16.200" viewBox="0 0 24 24"><path fill="#b4b4b4" d="M12 4.500C7 4.500 2.730 7.610 1 12c1.730 4.390 6 7.500 11 7.500s9.270-3.110 11-7.500c-1.730-4.390-6-7.500-11-7.500zM12 17c-2.760 0-5-2.240-5-5s2.240-5 5-5 5 2.240 5 5-2.240 5-5 5zm0-8c-1.660 0-3 1.340-3 3s1.340 3 3 3 3-1.340 3-3-1.340-3-3-3z"/></svg>
<span id="r4_p2" class="t p">18%</span>
<i class="a dot" style="left:909.4px;top:622.8px"></i>
<i class="a dot" style="left:928.1px;top:622.8px"></i>
<i class="a dot" style="left:946.8px;top:622.8px"></i>
<i class="a dot" style="left:965.4px;top:622.8px"></i>
<i class="a dot" style="left:984.1px;top:622.8px"></i>
</article>
</section>

<footer>
  <svg style="left:21px;top:686px" width="97" height="39" viewBox="0 0 97 39">
    <path fill="#5ac424" d="M0 0H96V30H35L25.200 38.6V30H0Z"/>
    <text id="t_logo" x="6.9" y="21.3" font-family="'Liberation Sans',sans-serif" font-weight="700" font-size="19.2" fill="#fff" stroke="#fff" stroke-width=".45" textLength="82.2" lengthAdjust="spacingAndGlyphs">YOUSCAN</text>
  </svg>
  <span id="t_foot" class="t" style="font-size:18.5px;color:#222">Data from YouScan</span>
</footer>
</body>
</html>
